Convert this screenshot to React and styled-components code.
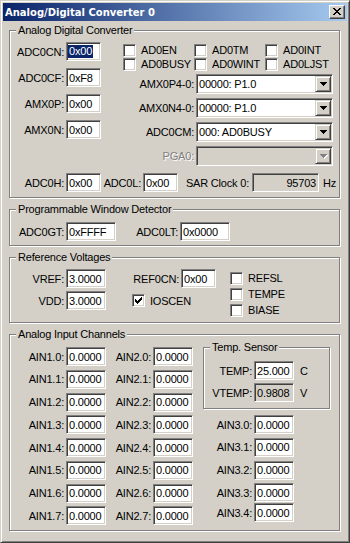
import React from 'react';
import styled, { createGlobalStyle } from 'styled-components';

const Global = createGlobalStyle`
  html, body { margin: 0; padding: 0; background: #d4d0c8; }
  body {
    font-family: "Liberation Sans", Arial, sans-serif;
    font-size: 11px;
    letter-spacing: -0.2px;
    color: #000;
  }
  * { box-sizing: border-box; }
`;

const Win = styled.div`
  width: 350px;
  height: 543px;
  background: #d4d0c8;
  border: 1px solid;
  border-color: #d4d0c8 #404040 #404040 #d4d0c8;
  box-shadow: inset 1px 1px 0 #fff, inset -1px -1px 0 #808080;
  padding: 2px;
  display: flex;
  flex-direction: column;
`;

const TitleBar = styled.div`
  height: 18px;
  flex: none;
  display: flex;
  align-items: center;
  padding: 0 2px;
  background: linear-gradient(to right, #0a246a, #a6caf0);
`;

const TitleText = styled.span`
  font-family: "DejaVu Sans", Verdana, sans-serif;
  font-weight: bold;
  font-size: 10px;
  letter-spacing: 0;
  color: #fff;
  white-space: nowrap;
`;

const CloseBtn = styled.div`
  margin-left: auto;
  width: 16px;
  height: 14px;
  background: #d4d0c8;
  border: 1px solid;
  border-color: #fff #404040 #404040 #fff;
  box-shadow: inset -1px -1px 0 #808080;
  display: flex;
  align-items: center;
  justify-content: center;
  padding: 0 1px 1px 0;
`;

const Body = styled.div`
  flex: 1;
  display: flex;
  flex-direction: column;
  gap: 5px;
  padding: 3px 7px 0 6px;
`;

const Group = styled.fieldset`
  margin: 0;
  min-width: 0;
  padding: ${(p) => p.$pad || '0'};
  width: ${(p) => (p.$w ? `${p.$w}px` : 'auto')};
  border: 1px solid #808080;
  box-shadow: inset 1px 1px 0 #fff, 1px 1px 0 #fff;
`;

const Legend = styled.legend`
  margin-left: 6px;
  padding: 0 2px;
  line-height: 13px;
  height: 13px;
  background: #d4d0c8;
  white-space: nowrap;
`;

const Row = styled.div`
  display: flex;
  align-items: center;
  height: ${(p) => p.$h || 19}px;
  margin-top: ${(p) => p.$mt || 0}px;
  margin-left: ${(p) => p.$ml || 0}px;
  flex: none;
`;

const Label = styled.span`
  width: ${(p) => p.$w}px;
  flex: none;
  text-align: right;
  margin-right: ${(p) => (p.$gap === undefined ? 2 : p.$gap)}px;
  white-space: nowrap;
  color: ${(p) => (p.$disabled ? '#808080' : '#000')};
  text-shadow: ${(p) => (p.$disabled ? '1px 1px 0 #fff' : 'none')};
`;

const Sunken = styled.div`
  flex: none;
  width: ${(p) => p.$w}px;
  height: ${(p) => p.$h || 19}px;
  background: ${(p) => (p.$ro ? '#d4d0c8' : '#fff')};
  border: 1px solid;
  border-color: #808080 #fff #fff #808080;
  box-shadow: inset 1px 1px 0 #404040, inset -1px -1px 0 #d4d0c8;
`;

const Edit = styled(Sunken)`
  display: flex;
  align-items: center;
  justify-content: ${(p) => (p.$right ? 'flex-end' : 'flex-start')};
  padding: 0 2px;
  white-space: nowrap;
  overflow: hidden;
`;

const Selected = styled.span`
  background: #0a246a;
  color: #fff;
  margin-left: -1px;
  padding: 0 1px;
  line-height: 13px;
`;

const Unit = styled.span`
  margin-left: ${(p) => p.$ml || 6}px;
  white-space: nowrap;
`;

const ComboBox = styled(Sunken)`
  display: flex;
  align-items: stretch;
  padding: 1px;
`;

const ComboText = styled.span`
  flex: 1;
  display: flex;
  align-items: center;
  padding-left: 1px;
  white-space: nowrap;
  overflow: hidden;
`;

const DropBtn = styled.div`
  width: 16px;
  flex: none;
  background: #d4d0c8;
  border: 1px solid;
  border-color: #d4d0c8 #404040 #404040 #d4d0c8;
  box-shadow: inset 1px 1px 0 #fff, inset -1px -1px 0 #808080;
  display: flex;
  align-items: center;
  justify-content: center;
  padding-left: 1px;
`;

const Glyph = styled.svg`
  display: block;
  flex: none;
`;

const Pixels = ({ rows, color = '#000', shadow }) => {
  const w = rows[0].length;
  const h = rows.length;
  const pts = [];
  rows.forEach((r, y) => [...r].forEach((c, x) => { if (c === 'X') pts.push([x, y]); }));
  const extra = shadow ? 1 : 0;
  return (
    <Glyph width={w + extra} height={h + extra} shapeRendering="crispEdges">
      {shadow && pts.map(([x, y]) => <rect key={`s${x}-${y}`} x={x + 1} y={y + 1} width="1" height="1" fill={shadow} />)}
      {pts.map(([x, y]) => <rect key={`${x}-${y}`} x={x} y={y} width="1" height="1" fill={color} />)}
    </Glyph>
  );
};

const CLOSE = ['XX....XX', '.XX..XX.', '..XXXX..', '...XX...', '..XXXX..', '.XX..XX.', 'XX....XX'];
const ARROW = ['XXXXXXX', '.XXXXX.', '..XXX..', '...X...'];
const CHECK = ['......X', '.....XX', 'X...XXX', 'XX.XXX.', 'XXXXX..', '.XXX...', '..X....'];

const Combo = ({ w, value, disabled }) => (
  <ComboBox $w={w} $h={20} $ro={disabled}>
    <ComboText>{value}</ComboText>
    <DropBtn>
      {disabled ? <Pixels rows={ARROW} color="#808080" shadow="#fff" /> : <Pixels rows={ARROW} />}
    </DropBtn>
  </ComboBox>
);

const Box = styled(Sunken)`
  width: 13px;
  height: 13px;
  display: flex;
  align-items: center;
  justify-content: center;
`;

const CheckItem = styled.div`
  display: flex;
  align-items: center;
  gap: 5px;
  height: ${(p) => p.$h || 14}px;
  white-space: nowrap;
`;

const Check = ({ label, checked, h }) => (
  <CheckItem $h={h}>
    <Box $w={13} $h={13}>{checked && <Pixels rows={CHECK} />}</Box>
    <span>{label}</span>
  </CheckItem>
);

/* ---- Group 1 ---- */
const TopArea = styled.div`
  display: flex;
  align-items: flex-start;
`;

const Column = styled.div`
  display: flex;
  flex-direction: column;
  flex: none;
  width: ${(p) => (p.$w ? `${p.$w}px` : 'auto')};
  gap: ${(p) => p.$gap || 0}px;
  padding-top: ${(p) => p.$pt || 0}px;
  padding-left: ${(p) => p.$pl || 0}px;
  margin-left: ${(p) => p.$ml || 0}px;
`;

const CheckGrid = styled.div`
  display: grid;
  grid-template-columns: 71px 71px 71px;
  grid-auto-rows: 14px;
  margin-top: 2px;
`;

const ComboList = styled.div`
  display: flex;
  flex-direction: column;
  gap: 4px;
  margin-top: 3px;
`;

const Field = ({ label, lw = 54, w = 35, gap, children, ro, right }) => (
  <>
    <Label $w={lw} $gap={gap}>{label}</Label>
    <Edit $w={w} $ro={ro} $right={right}>{children}</Edit>
  </>
);

const ains1 = ['1.0', '1.1', '1.2', '1.3', '1.4', '1.5', '1.6', '1.7'];
const ains2 = ['2.0', '2.1', '2.2', '2.3', '2.4', '2.5', '2.6', '2.7'];
const ains3 = ['3.0', '3.1', '3.2', '3.3'];

const AinCol = styled.div`
  display: flex;
  flex-direction: column;
  gap: 3.75px;
  padding-top: 6px;
  flex: none;
`;

const AinStack = styled.div`
  display: flex;
  flex-direction: column;
  gap: 3.75px;
  margin-top: 6px;
`;

const AinArea = styled.div`
  display: flex;
  align-items: flex-start;
`;

export default function App() {
  return (
    <>
      <Global />
      <Win>
        <TitleBar>
          <TitleText>Analog/Digital Converter 0</TitleText>
          <CloseBtn><Pixels rows={CLOSE} /></CloseBtn>
        </TitleBar>
        <Body>
          <Group $pad="4px 0 5px 0">
            <Legend>Analog Digital Converter</Legend>
            <TopArea>
              <Column $w={91} $gap={7} $pt={1}>
                <Row><Field label="ADC0CN:"><Selected>0x00</Selected></Field></Row>
                <Row><Field label="ADC0CF:">0xF8</Field></Row>
                <Row><Field label="AMX0P:">0x00</Field></Row>
                <Row><Field label="AMX0N:">0x00</Field></Row>
              </Column>
              <Column $w={210} $ml={22}>
                <CheckGrid>
                  <Check label="AD0EN" />
                  <Check label="AD0TM" />
                  <Check label="AD0INT" />
                  <Check label="AD0BUSY" />
                  <Check label="AD0WINT" />
                  <Check label="AD0LJST" />
                </CheckGrid>
                <ComboList>
                  <Row $h={20}><Label $w={71}>AMX0P4-0:</Label><Combo w={137} value="00000: P1.0" /></Row>
                  <Row $h={20}><Label $w={71}>AMX0N4-0:</Label><Combo w={137} value="00000: P1.0" /></Row>
                  <Row $h={20}><Label $w={71}>ADC0CM:</Label><Combo w={137} value="000: AD0BUSY" /></Row>
                  <Row $h={20}><Label $w={71} $disabled>PGA0:</Label><Combo w={137} value="" disabled /></Row>
                </ComboList>
              </Column>
            </TopArea>
            <Row $mt={7}>
              <Field label="ADC0H:">0x00</Field>
              <Field label="ADC0L:" lw={40}>0x00</Field>
              <Field label="SAR Clock 0:" lw={71} gap={3} w={67} ro right>95703</Field>
              <Unit $ml={4}>Hz</Unit>
            </Row>
          </Group>

          <Group $pad="6px 0 4px 0">
            <Legend>Programmable Window Detector</Legend>
            <Row>
              <Field label="ADC0GT:" w={50}>0xFFFF</Field>
              <Field label="ADC0LT:" lw={62} w={50}>0x0000</Field>
            </Row>
          </Group>

          <Group $pad="5px 0 4px 0">
            <Legend>Reference Voltages</Legend>
            <TopArea>
              <Column $w={96} $gap={3}>
                <Row><Field label="VREF:" w={40}>3.0000</Field></Row>
                <Row><Field label="VDD:" w={40}>3.0000</Field></Row>
              </Column>
              <Column $w={110} $gap={3}>
                <Row><Field label="REF0CN:" lw={73}>0x00</Field></Row>
                <Row $ml={26}><Check label="IOSCEN" checked h={19} /></Row>
              </Column>
              <Column $ml={14} $pt={1}>
                <Check label="REFSL" h={16} />
                <Check label="TEMPE" h={16} />
                <Check label="BIASE" h={16} />
              </Column>
            </TopArea>
          </Group>

          <Group $pad="0 0 5px 0">
            <Legend>Analog Input Channels</Legend>
            <AinArea>
              <AinCol>
                {ains1.map((a) => (
                  <Row key={a}><Field label={`AIN${a}:`} w={40}>0.0000</Field></Row>
                ))}
              </AinCol>
              <AinCol>
                {ains2.map((a) => (
                  <Row key={a}><Field label={`AIN${a}:`} lw={45} w={40}>0.0000</Field></Row>
                ))}
              </AinCol>
              <Column $pl={10}>
                <Group $w={127} $pad="7px 0 6px 0">
                  <Legend>Temp. Sensor</Legend>
                  <Row><Field label="TEMP:" lw={48} w={40}>25.000</Field><Unit>C</Unit></Row>
                  <Row $mt={3}><Field label="VTEMP:" lw={48} w={40} ro>0.9808</Field><Unit>V</Unit></Row>
                </Group>
                <AinStack>
                  {ains3.map((a) => (
                    <Row key={a}><Field label={`AIN${a}:`} lw={49} w={40}>0.0000</Field></Row>
                  ))}
                </AinStack>
                <Row $mt={1}><Field label="AIN3.4:" lw={49} w={40}>0.0000</Field></Row>
              </Column>
            </AinArea>
          </Group>
        </Body>
      </Win>
    </>
  );
}
